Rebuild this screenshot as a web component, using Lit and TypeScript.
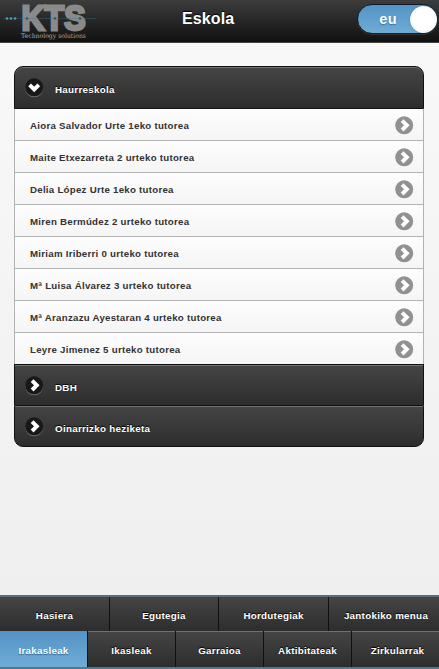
import { LitElement, html, css, svg } from "lit";
import { customElement, property } from "lit/decorators.js";
import { classMap } from "lit/directives/class-map.js";

@customElement("round-icon")
class RoundIcon extends LitElement {
  @property() dir = "right";
  @property({ type: Boolean }) dark = false;
  static styles = css`
    :host { display: block; width: 20px; height: 20px; flex: none; }
    svg { display: block; }
  `;
  render() {
    const d = this.dir === "down" ? "M4.6 6.9 L9.2 11.4 L13.8 6.9" : "M7.1 4.6 L11.8 9.3 L7.1 14";
    return html`<svg width="20" height="20" viewBox="0 0 20 20">
      ${this.dark ? svg`<circle cx="9.2" cy="10.3" r="9" fill="#6c6c6c" />` : ""}
      <circle cx="9.2" cy="9.3" r="9" fill=${this.dark ? "#181818" : "#919191"} />
      <path d=${d} fill="none" stroke="#fff" stroke-width="3.9" />
    </svg>`;
  }
}

@customElement("app-root")
class AppRoot extends LitElement {
  static styles = css`
    :host {
      display: flex; flex-direction: column; box-sizing: border-box;
      width: 439px; height: 669px; overflow: hidden;
      font-family: "Liberation Sans", Arial, sans-serif; font-weight: bold;
      background: linear-gradient(#f9f9f9, #eee);
    }
    header {
      display: grid; grid-template-columns: 182px 1fr auto; box-sizing: border-box;
      height: 43px; flex: none; border-bottom: 1px solid #454545;
      background: linear-gradient(#3c3c3c, #111); color: #fff;
    }
    .logo { display: block; }
    .logo .big { font: bold 35px "Liberation Sans", Arial, sans-serif; }
    .logo .small { font: 6.4px "DejaVu Serif", serif; }
    h1 { margin: 0; font-size: 16px; letter-spacing: .1px; line-height: 38px; text-shadow: 0 -1px 1px #000; }
    .switch {
      display: flex; align-items: center; justify-content: flex-end;
      box-sizing: border-box; width: 81px; height: 30px; margin: 4px 1px 0 0;
      border: 1px solid #111c26; border-radius: 15px;
      background: linear-gradient(#5393c5, #6facd5);
      box-shadow: 0 1px 0 #333;
    }
    .switch span { font-size: 14.5px; letter-spacing: .4px; margin-right: 13px; text-shadow: 0 1px 1px #3373a5; line-height: 28px; }
    .knob { width: 27px; height: 27px; border-radius: 50%; background: radial-gradient(#fff 55%, #dfe6ea); box-shadow: 0 0 1px #345; }
    main { flex: 1; padding: 23px 14px 0; }
    .set { width: 410px; }
    .bar {
      display: flex; align-items: flex-start; box-sizing: border-box; height: 41px;
      padding: 11px 0 0 10px; color: #fff; font-size: 9.8px; letter-spacing: .28px;
      border: 1px solid #111; border-bottom: 0;
      background: linear-gradient(#454545, #2d2d2d); box-shadow: inset 0 1px 0 #707070;
      text-shadow: 0 -1px 1px #000;
    }
    .bar span { margin-left: 10px; line-height: 24px; }
    .bar.first { height: 43px; border-bottom: 1px solid #111; border-radius: 9px 9px 0 0; }
    .bar.last { border-bottom: 1px solid #111; border-radius: 0 0 9px 9px; height: 42px; }
    .row {
      display: flex; justify-content: space-between; align-items: center; box-sizing: border-box;
      height: 32px; padding: 2px 8px 0 15px; border: 1px solid #b3b3b3; border-top: 0;
      color: #333; font-size: 9.7px; letter-spacing: .26px;
      background: linear-gradient(#fdfdfd, #f5f5f5);
    }
    .row:nth-last-child(3) { height: 31px; border-bottom: 0; }
    footer { flex: none; height: 74px; box-sizing: border-box; border-top: 2px solid #5b6c7a; border-bottom: 2px solid #4f7893; }
    nav { display: grid; }
    .four { grid-template: 34px / 110px 109px 110px 110px; }
    .five { grid-template: 36px / repeat(4, 88px) 87px; }
    nav a {
      box-sizing: border-box; overflow: hidden; text-align: center; color: #fff;
      font-size: 9.8px; letter-spacing: .28px;
      line-height: 38px; border-right: 1px solid #101010; white-space: nowrap;
      background: linear-gradient(#454545, #2d2d2d); text-shadow: 0 -1px 1px #000;
    }
    .five a { line-height: 40px; box-shadow: inset 0 1px 0 #707070; }
    nav a:last-child { border-right: 0; padding-left: 4px; }
    nav a.active { background: linear-gradient(#5393c5, #6facd5); text-shadow: 0 1px 1px #2c6594; box-shadow: none; }
  `;
  rows = [
    "Aiora Salvador Urte 1eko tutorea", "Maite Etxezarreta 2 urteko tutorea",
    "Delia López Urte 1eko tutorea", "Miren Bermúdez 2 urteko tutorea",
    "Miriam Iriberri 0 urteko tutorea", "Mª Luisa Álvarez 3 urteko tutorea",
    "Mª Aranzazu Ayestaran 4 urteko tutorea", "Leyre Jimenez 5 urteko tutorea",
  ];
  top = ["Hasiera", "Egutegia", "Hordutegiak", "Jantokiko menua"];
  bottom = ["Irakasleak", "Ikasleak", "Garraioa", "Aktibitateak", "Zirkularrak"];
  render() {
    return html`
      <header>
        <svg class="logo" width="100" height="42" viewBox="0 0 100 42">
          <text class="big" x="21.5" y="29.6" textLength="64" lengthAdjust="spacingAndGlyphs" fill="#8a8a8a" stroke="#8a8a8a" stroke-width="2.8">KTS</text>
          <path d="M3 18.5H96" stroke="#387792" stroke-width=".7" opacity=".55" />
          <g fill="#4c9dbb"><circle cx="7" cy="18.5" r="1.3" /><circle cx="11" cy="18.5" r="1.3" /><circle cx="15" cy="18.5" r="1.3" /></g>
          <g fill="#34586a"><circle cx="27" cy="18.5" r="1.3" /><circle cx="55" cy="18.5" r="1.3" /><circle cx="80" cy="18.5" r="1.3" /></g>
          <text class="small" x="21" y="38" textLength="65" lengthAdjust="spacingAndGlyphs" fill="#aaa">Technology solutions</text>
        </svg>
        <h1>Eskola</h1>
        <div class="switch"><span>eu</span><div class="knob"></div></div>
      </header>
      <main>
        <div class="set">
          <div class="bar first"><round-icon dark dir="down"></round-icon><span>Haurreskola</span></div>
          ${this.rows.map((r) => html`<div class="row"><span>${r}</span><round-icon></round-icon></div>`)}
          <div class="bar"><round-icon dark></round-icon><span>DBH</span></div>
          <div class="bar last"><round-icon dark></round-icon><span>Oinarrizko heziketa</span></div>
        </div>
      </main>
      <footer>
        <nav class="four">${this.top.map((t) => html`<a>${t}</a>`)}</nav>
        <nav class="five">${this.bottom.map((t, i) => html`<a class=${classMap({ active: i === 0 })}>${t}</a>`)}</nav>
      </footer>
    `;
  }
}
